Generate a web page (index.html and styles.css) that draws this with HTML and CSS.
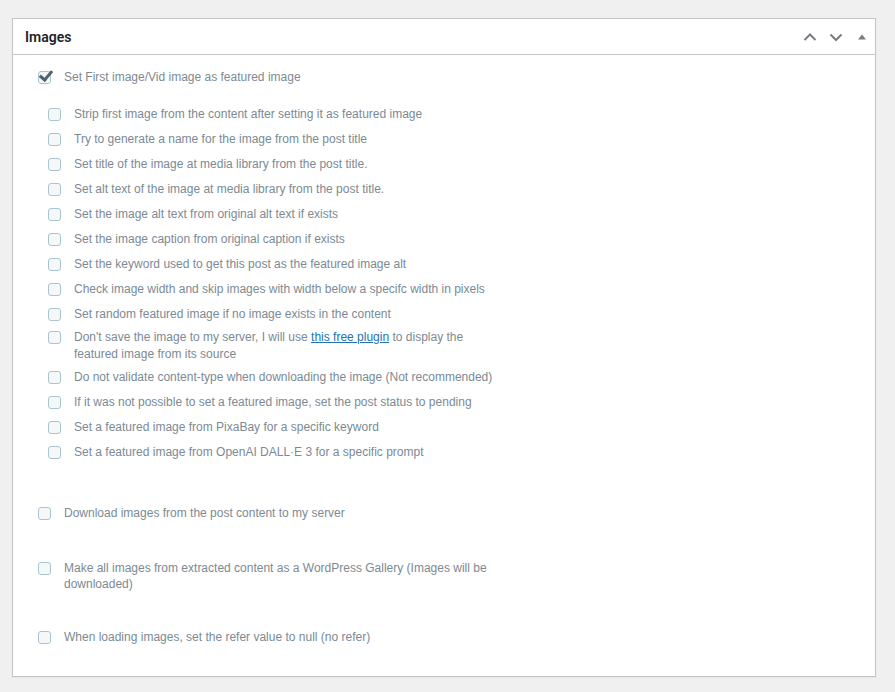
FILE: index.html
```html
<!DOCTYPE html>
<html lang="en">
<head>
    <meta charset="UTF-8">
    <meta name="viewport" content="width=device-width, initial-scale=1.0">
    <title>Images</title>
    <link rel="stylesheet" href="styles.css">
</head>
<body>

    <div class="postbox">
        <div class="postbox-header">
            <h2>Images</h2>
            <div class="handle-actions">
                <button class="handle-btn" type="button" aria-label="Move up">
                    <svg width="16" height="16" viewBox="0 0 16 16"><path d="M2.5 11 L8 5.5 L13.5 11" fill="none" stroke="#787c82" stroke-width="2"/></svg>
                </button>
                <button class="handle-btn" type="button" aria-label="Move down">
                    <svg width="16" height="16" viewBox="0 0 16 16"><path d="M2.5 5.5 L8 11 L13.5 5.5" fill="none" stroke="#787c82" stroke-width="2"/></svg>
                </button>
                <button class="handle-btn" type="button" aria-label="Toggle panel">
                    <svg width="10" height="10" viewBox="0 0 10 10"><path d="M1 7.5 L5 2.5 L9 7.5 Z" fill="#787c82"/></svg>
                </button>
            </div>
        </div>

        <div class="inside">
            <div class="field">
                <label class="opt"><input type="checkbox" checked><span>Set First image/Vid image as featured image</span></label>

                <div class="sub">
                    <label class="opt"><input type="checkbox"><span>Strip first image from the content after setting it as featured image</span></label>
                    <label class="opt"><input type="checkbox"><span>Try to generate a name for the image from the post title</span></label>
                    <label class="opt"><input type="checkbox"><span>Set title of the image at media library from the post title.</span></label>
                    <label class="opt"><input type="checkbox"><span>Set alt text of the image at media library from the post title.</span></label>
                    <label class="opt"><input type="checkbox"><span>Set the image alt text from original alt text if exists</span></label>
                    <label class="opt"><input type="checkbox"><span>Set the image caption from original caption if exists</span></label>
                    <label class="opt"><input type="checkbox"><span>Set the keyword used to get this post as the featured image alt</span></label>
                    <label class="opt"><input type="checkbox"><span>Check image width and skip images with width below a specifc width in pixels</span></label>
                    <label class="opt"><input type="checkbox"><span>Set random featured image if no image exists in the content</span></label>
                    <label class="opt multi"><input type="checkbox"><span>Don't save the image to my server, I will use <a href="#">this free plugin</a> to display the featured image from its source</span></label>
                    <label class="opt"><input type="checkbox"><span>Do not validate content-type when downloading the image (Not recommended)</span></label>
                    <label class="opt"><input type="checkbox"><span>If it was not possible to set a featured image, set the post status to pending</span></label>
                    <label class="opt"><input type="checkbox"><span>Set a featured image from PixaBay for a specific keyword</span></label>
                    <label class="opt"><input type="checkbox"><span>Set a featured image from OpenAI DALL·E 3 for a specific prompt</span></label>
                </div>
            </div>

            <div class="field">
                <label class="opt"><input type="checkbox"><span>Download images from the post content to my server</span></label>
            </div>

            <div class="field gallery">
                <label class="opt multi tight"><input type="checkbox"><span>Make all images from extracted content as a WordPress Gallery (Images will be downloaded)</span></label>
            </div>

            <div class="field">
                <label class="opt"><input type="checkbox"><span>When loading images, set the refer value to null (no refer)</span></label>
            </div>
        </div>
    </div>

</body>
</html>
```

FILE: styles.css
```css
body {
    margin: 0;
    background-color: #f0f0f1;
    font-family: "Liberation Sans", Arial, sans-serif;
    padding: 18px 19px 15px 12px;
}

.postbox {
    background-color: #fff;
    border: 1px solid #c3c4c7;
    box-shadow: 0 1px 1px rgba(0, 0, 0, 0.04);
}

.postbox-header {
    display: flex;
    align-items: center;
    justify-content: space-between;
    height: 35px;
    border-bottom: 1px solid #c3c4c7;
}

.postbox-header h2 {
    margin: 0;
    padding: 0 12px;
    font-family: Roboto, "Liberation Sans", sans-serif;
    font-size: 14px;
    font-weight: 600;
    color: #1d2327;
}

.handle-actions {
    display: flex;
    align-items: center;
}

.handle-btn {
    display: flex;
    align-items: center;
    justify-content: center;
    width: 26px;
    height: 35px;
    padding: 0;
    border: 0;
    background: none;
}

.inside {
    padding: 10px 0 26px 25px;
}

.field {
    margin-bottom: 32px;
}

.field.gallery {
    margin-bottom: 31px;
}

.field:last-child {
    margin-bottom: 0;
}

.sub {
    padding: 12px 0 4px 10px;
}

.opt {
    display: flex;
    align-items: flex-start;
    max-width: 462px;
    padding: 4px 0;
    font-size: 12px;
    line-height: 17px;
    color: #7b8a94;
}

.opt.multi {
    padding: 2px 0;
}

.opt.tight {
    line-height: 16px;
}

.opt span {
    flex: 1;
}

.opt a {
    color: #2271b1;
}

.opt input {
    appearance: none;
    -webkit-appearance: none;
    flex: none;
    width: 13px;
    height: 13px;
    margin: 2px 13px 0 0;
    border: 1px solid #a8c4d0;
    border-radius: 3px;
    background-color: #f5f8f9;
    position: relative;
}

.opt input:checked::after {
    content: "";
    position: absolute;
    left: 3px;
    top: -4px;
    width: 5px;
    height: 10px;
    border: solid #50626e;
    border-width: 0 3px 3px 0;
    transform: rotate(40deg);
}
```
